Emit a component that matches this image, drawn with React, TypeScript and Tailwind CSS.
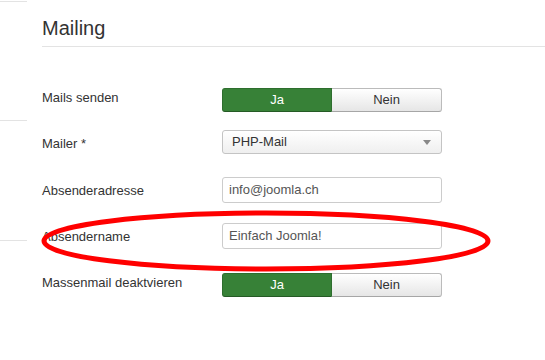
import React from "react";

const font = { fontFamily: '"Liberation Sans", Arial, sans-serif' };

function Toggle() {
  return (
    <div className="flex w-[220px] h-[24px] text-[13px]">
      <div className="w-[110px] h-full flex items-center justify-center bg-[#378137] text-white rounded-l-[3px] border border-[#2e6e2e] border-b-[#255a25]">
        Ja
      </div>
      <div className="w-[110px] h-full flex items-center justify-center bg-gradient-to-b from-white to-[#e6e6e6] text-[#333] rounded-r-[3px] border border-l-0 border-[#bbb] border-b-[#a6a6a6]">
        Nein
      </div>
    </div>
  );
}

function Row({
  label,
  labelPt,
  mt,
  h,
  children,
}: {
  label: string;
  labelPt: string;
  mt: string;
  h: string;
  children: React.ReactNode;
}) {
  return (
    <div className={`flex ${mt} ${h}`}>
      <div className={`w-[180px] shrink-0 text-[13px] leading-[18px] text-[#333] ${labelPt}`}>{label}</div>
      <div>{children}</div>
    </div>
  );
}

export default function App() {
  return (
    <div className="relative w-[545px] h-[360px] overflow-hidden bg-white flex" style={font}>
      <div className="w-[27px] shrink-0 flex flex-col">
        <div className="h-[1px]" />
        <div className="h-[119px] border-t border-[#e3e3e3]" />
        <div className="h-[120px] border-t border-[#e3e3e3]" />
        <div className="h-[120px] border-t border-[#e3e3e3]" />
      </div>
      <div className="ml-[15px] flex-1 flex flex-col">
        <div className="pt-[17px] pb-[7px] border-b border-[#e3e3e3] text-[20px] leading-[22px] text-[#333]">
          Mailing
        </div>
        <Row label="Mails senden" labelPt="pt-[1px]" mt="mt-[41px]" h="h-[24px]">
          <Toggle />
        </Row>
        <Row label="Mailer *" labelPt="pt-[5px]" mt="mt-[18px]" h="h-[24px]">
          <div className="w-[220px] h-[24px] rounded-[3px] border border-[#c4c4c4] bg-gradient-to-b from-white to-[#efefef] flex items-center justify-between pl-[9px] pr-[10px] text-[13px] text-[#333]">
            <span>PHP-Mail</span>
            <svg width="8" height="5" viewBox="0 0 8 5">
              <path d="M0 0 L8 0 L4 5 Z" fill="#888" />
            </svg>
          </div>
        </Row>
        <Row label="Absenderadresse" labelPt="pt-[5px]" mt="mt-[23px]" h="h-[26px]">
          <div className="w-[220px] h-[26px] rounded-[3px] border border-[#ccc] flex items-center pl-[6px] text-[13px] text-[#555]">
            info@joomla.ch
          </div>
        </Row>
        <Row label="Absendername" labelPt="pt-[5px]" mt="mt-[20px]" h="h-[26px]">
          <div className="w-[220px] h-[26px] rounded-[3px] border border-[#ccc] flex items-center pl-[6px] text-[13px] text-[#555]">
            Einfach Joomla!
          </div>
        </Row>
        <Row label="Massenmail deaktvieren" labelPt="pt-[1px]" mt="mt-[24px]" h="h-[24px]">
          <Toggle />
        </Row>
      </div>
      <svg className="absolute left-0 top-0 pointer-events-none" width="545" height="360">
        <ellipse cx="266" cy="241" rx="222" ry="28" fill="none" stroke="#ff0000" strokeWidth="5" />
      </svg>
    </div>
  );
}
